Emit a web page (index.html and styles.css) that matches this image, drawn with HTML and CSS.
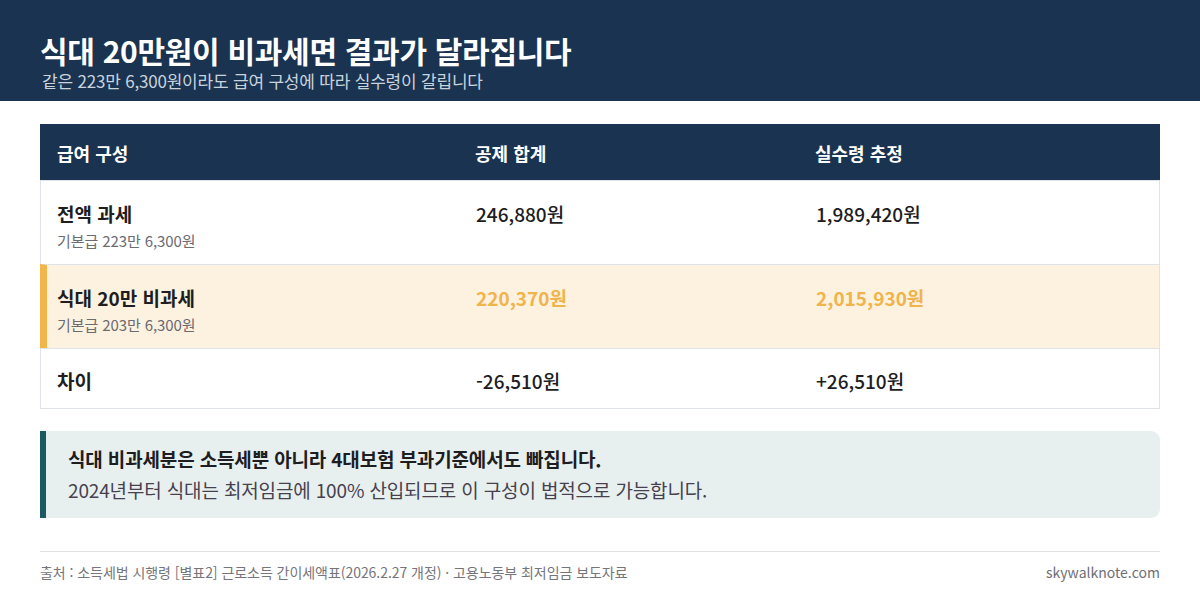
FILE: index.html
```html
<!DOCTYPE html>
<html lang="ko">
<head>
<meta charset="utf-8">
<link rel="stylesheet" href="styles.css">
</head>
<body>
<header class="hero">
  <h1 class="hero-title">식대 20만원이 비과세면 결과가 달라집니다</h1>
  <p class="hero-sub">같은 223만 6,300원이라도 급여 구성에 따라 실수령이 갈립니다</p>
</header>
<main class="content">
  <div class="table">
    <div class="row head">
      <div class="cell c1">급여 구성</div>
      <div class="cell c2">공제 합계</div>
      <div class="cell c3">실수령 추정</div>
    </div>
    <div class="row tall">
      <div class="cell c1"><div class="label">전액 과세</div><div class="sub">기본급 223만 6,300원</div></div>
      <div class="cell c2"><div class="num">246,880원</div></div>
      <div class="cell c3"><div class="num">1,989,420원</div></div>
    </div>
    <div class="row tall hl">
      <div class="cell c1"><div class="label">식대 20만 비과세</div><div class="sub">기본급 203만 6,300원</div></div>
      <div class="cell c2"><div class="num accent">220,370원</div></div>
      <div class="cell c3"><div class="num accent">2,015,930원</div></div>
    </div>
    <div class="row short">
      <div class="cell c1"><div class="label">차이</div></div>
      <div class="cell c2"><div class="num">-26,510원</div></div>
      <div class="cell c3"><div class="num">+26,510원</div></div>
    </div>
  </div>
  <div class="note">
    <p class="note-strong">식대 비과세분은 소득세뿐 아니라 4대보험 부과기준에서도 빠집니다.</p>
    <p class="note-text">2024년부터 식대는 최저임금에 100% 산입되므로 이 구성이 법적으로 가능합니다.</p>
  </div>
  <footer class="foot">
    <span class="src">출처 : 소득세법 시행령 [별표2] 근로소득 간이세액표(2026.2.27 개정) · 고용노동부 최저임금 보도자료</span>
    <span class="site">skywalknote.com</span>
  </footer>
</main>
</body>
</html>
```

FILE: styles.css
```css
* { box-sizing: border-box; }
html, body { margin: 0; padding: 0; }
body {
  width: 1200px;
  height: 596px;
  overflow: hidden;
  background: #ffffff;
  font-family: "Noto Sans CJK KR", "Noto Sans", sans-serif;
  color: #1d1d22;
}
.hero {
  background: #1a3350;
  height: 101px;
  padding: 32px 40px 0 40px;
}
.hero-title {
  margin: 0;
  font-size: 30px;
  font-weight: 700;
  line-height: 36px;
  color: #ffffff;
  letter-spacing: -0.3px;
}
.hero-sub {
  margin: 2px 0 0 2px;
  font-size: 17px;
  line-height: 22px;
  color: #c9d3de;
  letter-spacing: -0.2px;
}
.content {
  padding: 23px 40px 0 40px;
}
.table {
  width: 1120px;
  border: 1px solid #dfe2e6;
  border-top: none;
}
.row {
  display: flex;
  border-top: 1px solid #dfe2e6;
}
.row.head {
  background: #1a3350;
  height: 56px;
  border-top: none;
  align-items: center;
  color: #ffffff;
  font-size: 18px;
  font-weight: 700;
  margin: 0 -1px;
}
.row.head .c1 { padding-left: 17px; }
.row.head .cell { padding-top: 1px; }
.cell {
  padding-left: 16px;
}
.c1 { width: 419px; }
.c2 { width: 340px; }
.c3 { flex: 1; }
.row.tall { height: 84px; padding-top: 20px; }
.row.short { height: 60px; align-items: center; padding-top: 4px; }
.row.hl {
  background: #fdf1df;
  margin-left: -1px;
  border-left: 7px solid #f1b54a;
}
.row.hl .c1 { width: 413px; }
.row.hl .cell.c1 { padding-left: 10px; }
.label {
  font-size: 19px;
  font-weight: 700;
  line-height: 26px;
}
.sub {
  margin-top: 4px;
  font-size: 15px;
  line-height: 19px;
  color: #6b6b70;
  letter-spacing: -0.1px;
}
.num {
  font-size: 19px;
  line-height: 26px;
  font-weight: 500;
}
.num.accent {
  color: #f0b44c;
  font-weight: 700;
}
.note {
  margin-top: 22px;
  width: 1120px;
  height: 87px;
  background: #e8f0ef;
  border-left: 6px solid #1a5a63;
  border-radius: 0 9px 9px 0;
  padding: 14px 0 0 22px;
}
.note p { margin: 0; letter-spacing: -0.15px; }
.note-strong {
  font-size: 19px;
  font-weight: 700;
  line-height: 28px;
  color: #1d1d22;
}
.note-text {
  margin-top: 3px !important;
  font-size: 19px;
  line-height: 28px;
  color: #47404e;
}
.foot {
  margin-top: 33px;
  border-top: 1px solid #e2e2e4;
  display: flex;
  justify-content: space-between;
  align-items: center;
  padding-top: 10px;
  width: 1120px;
}
.src {
  font-size: 14px;
  color: #75757a;
  letter-spacing: -0.05px;
}
.site {
  font-size: 14px;
  color: #6f6f74;
}
```
